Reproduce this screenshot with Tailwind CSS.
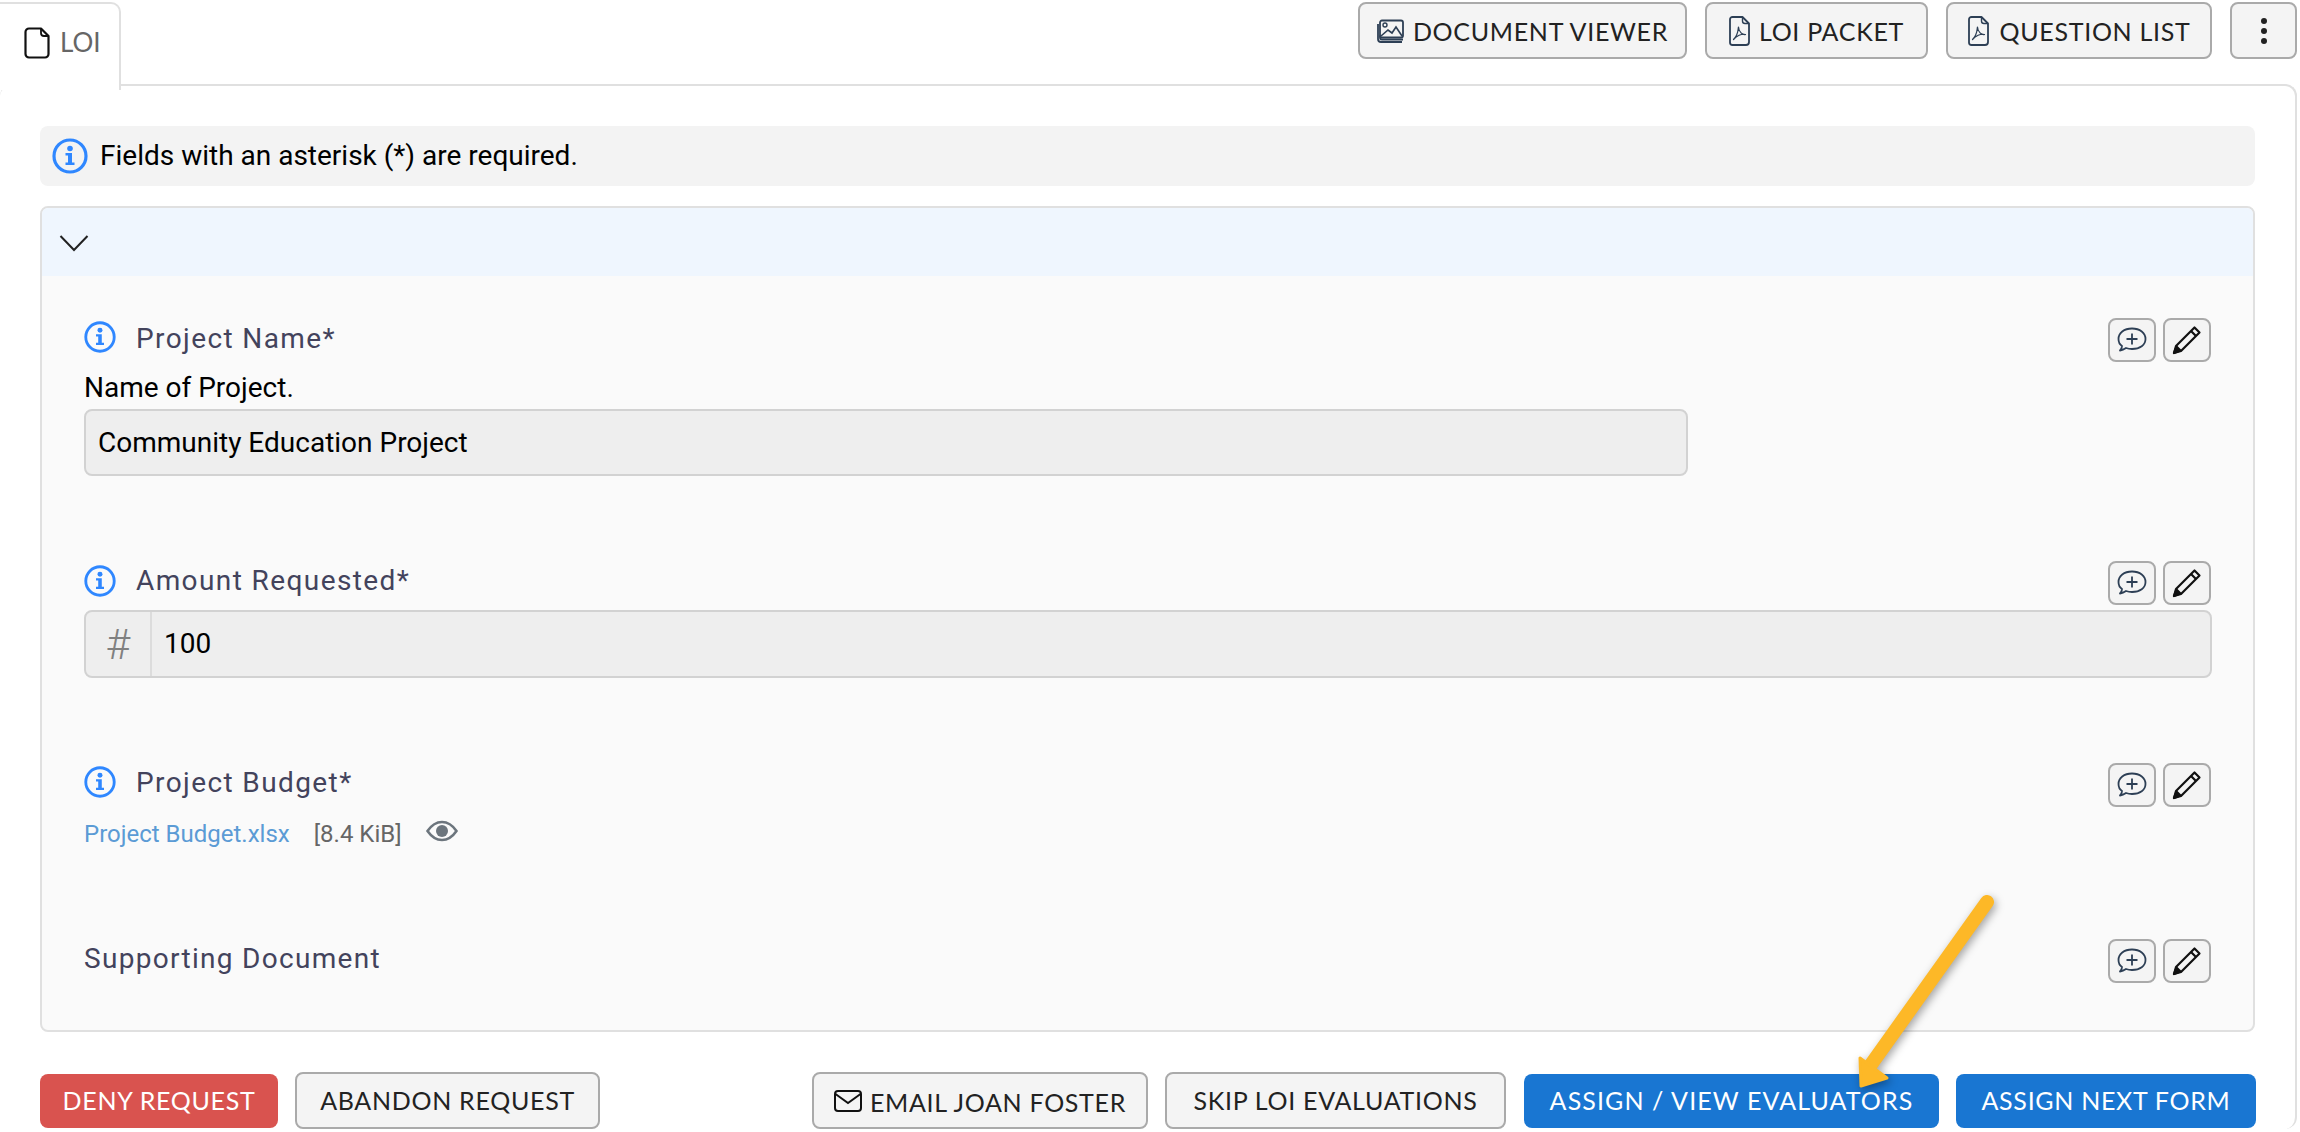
<!DOCTYPE html>
<html lang="en">
  <head>
    <meta charset="UTF-8" />
    <title>LOI</title>
    <script src="https://cdn.jsdelivr.net/npm/@tailwindcss/browser@4"></script>
  </head>
  <body class="bg-white font-['Roboto',sans-serif] text-black">
    <div class="relative w-[2300px] h-[1132px] overflow-hidden">
      <!-- Tab strip -->
      <div class="flex justify-between items-start h-[86px] pr-[3px]">
        <div class="relative z-10 flex items-center gap-[10px] w-[121px] h-[88px] mt-[2px] pl-[24px] pb-[9px] bg-white border-2 border-l-0 border-b-0 border-[#e0e0e0] rounded-tr-[10px] font-['Lato',sans-serif] text-[26px] text-[#666]">
          <svg class="w-[26px] h-[32px]" viewBox="0 0 26 32" fill="none" stroke="#111" stroke-width="2.2" stroke-linejoin="round"><path d="M5 1.5h12l7.5 7.5v18a3.5 3.5 0 0 1-3.5 3.5H5A3.5 3.5 0 0 1 1.5 27V5A3.5 3.5 0 0 1 5 1.5z"/><path d="M17 1.5V6a3 3 0 0 0 3 3h4.500" stroke-width="1.800"/></svg>
          <span>LOI</span>
        </div>
        <div class="flex gap-[18px] mt-[2px] font-['Lato',sans-serif] text-[25px] tracking-[0.7px] text-[#222]">
          <button class="flex items-center justify-center gap-[8px] w-[329px] h-[57px] bg-[#f4f4f4] border-2 border-[#aaa] rounded-[8px]">
            <svg class="w-[28px] h-[24px]" viewBox="0 0 28 24" fill="none" stroke="#2d3f55" stroke-width="1.800"><rect x="3" y="1.500" width="23" height="17" rx="2"/><path d="M3 16.500v2a2 2 0 0 0 2 2h21M1 5v15a3 3 0 0 0 3 3h21"/><circle cx="8" cy="6" r="2" stroke-width="1.400"/><path d="M4 17l7-6 4 3 4-6 6 9" stroke-width="1.600"/></svg>
            <span class="pt-[3px]">DOCUMENT VIEWER</span>
          </button>
          <button class="flex items-center justify-center gap-[9px] w-[223px] h-[57px] bg-[#f4f4f4] border-2 border-[#aaa] rounded-[8px]">
            <svg class="w-[21px] h-[30px]" viewBox="0 0 21 30" fill="none" stroke="#2d3f55" stroke-width="1.800" stroke-linejoin="round"><path d="M3.500 1h10l6.500 6.500V26a3 3 0 0 1-3 3H3.500a2.500 2.500 0 0 1-2.500-2.500v-23A2.500 2.500 0 0 1 3.500 1z"/><path d="M13.500 1v4a2.500 2.500 0 0 0 2.500 2.500h4" stroke-width="1.400"/><path d="M9.500 11c-.8 3 .3 7-5 12.500 3-3.500 8-6 12-5-2.500 1-7-3-7-7.500z" stroke-width="1.200"/></svg>
            <span class="pt-[3px]">LOI PACKET</span>
          </button>
          <button class="flex items-center justify-center gap-[11px] w-[266px] h-[57px] bg-[#f4f4f4] border-2 border-[#aaa] rounded-[8px]">
            <svg class="w-[21px] h-[30px]" viewBox="0 0 21 30" fill="none" stroke="#2d3f55" stroke-width="1.800" stroke-linejoin="round"><path d="M3.500 1h10l6.500 6.500V26a3 3 0 0 1-3 3H3.500a2.500 2.500 0 0 1-2.500-2.500v-23A2.500 2.500 0 0 1 3.500 1z"/><path d="M13.500 1v4a2.500 2.500 0 0 0 2.500 2.500h4" stroke-width="1.400"/><path d="M9.500 11c-.8 3 .3 7-5 12.500 3-3.500 8-6 12-5-2.500 1-7-3-7-7.500z" stroke-width="1.200"/></svg>
            <span class="pt-[3px]">QUESTION LIST</span>
          </button>
          <button class="flex flex-col items-center justify-center gap-[4px] w-[67px] h-[57px] bg-[#f4f4f4] border-2 border-[#aaa] rounded-[8px]">
            <span class="w-[6px] h-[6px] rounded-full bg-[#222]"></span>
            <span class="w-[6px] h-[6px] rounded-full bg-[#222]"></span>
            <span class="w-[6px] h-[6px] rounded-full bg-[#222]"></span>
          </button>
        </div>
      </div>

      <!-- Panel -->
      <div class="w-[2297px] -mt-[2px] pl-[40px] pr-[40px] pt-[40px] border-t-2 border-r-2 border-[#e0e0e0] rounded-[12px]">
        <div class="flex items-center gap-[11px] h-[60px] pl-[12px] bg-[#f3f3f3] rounded-[8px] text-[28px] w-[2215px]">
          <svg class="w-[36px] h-[36px]" viewBox="0 0 36 36"><circle cx="18" cy="18" r="16" fill="none" stroke="#2f87ff" stroke-width="3.200"/><circle cx="18" cy="10.500" r="2.800" fill="#2f87ff"/><path d="M13.500 15h6.500v9.500h2.500V27h-9v-2.500H16V17.500h-2.500z" fill="#2f87ff"/></svg>
          <span class="pl-[1px]">Fields with an asterisk (*) are required.</span>
        </div>

        <div class="mt-[20px] w-[2215px] h-[826px] border-2 border-[#e0e0e0] rounded-[8px] bg-[#fafafa] overflow-hidden">
          <div class="flex items-center h-[68px] pl-[17px] pt-[2px] bg-[#eff6fe]">
            <svg class="w-[30px] h-[18px]" viewBox="0 0 30 18" fill="none" stroke="#222" stroke-width="2"><path d="M1.500 2L15 16 28.500 2"/></svg>
          </div>

          <div class="pl-[42px] pr-[42px] pt-[42px]">
            <!-- Project Name -->
            <div class="h-[244px]">
              <div class="flex justify-between items-start h-[55px]">
                <div class="flex items-center gap-[20px] h-[34px] mt-[2px] text-[28px] tracking-[1.4px] text-[#43435c]">
                  <svg class="w-[32px] h-[32px]" viewBox="0 0 36 36"><circle cx="18" cy="18" r="16" fill="none" stroke="#2f87ff" stroke-width="3.200"/><circle cx="18" cy="10.500" r="2.800" fill="#2f87ff"/><path d="M13.500 15h6.500v9.500h2.500V27h-9v-2.500H16V17.500h-2.500z" fill="#2f87ff"/></svg>
                  <span class="pt-[3px]">Project Name*</span>
                </div>
                <div class="flex gap-[7px]">
                  <button class="flex items-center justify-center w-[48px] h-[44px] bg-[#f4f4f4] border-2 border-[#aaa] rounded-[8px]">
                    <svg class="w-[30px] h-[26px]" viewBox="0 0 30 26" fill="none" stroke="#2d3f55" stroke-width="1.800"><path d="M5 19C2 17 1.500 14.500 1.500 12 1.500 6 7 1.500 15 1.500S28.500 6 28.500 12 23 22 15 22c-2 0-4-.3-6-1-1.500 1-3 2-6 2.500 1-1 2-3 2-4.500z" stroke-linejoin="round"/><path d="M15 6.500v11M9.500 12h11"/></svg>
                  </button>
                  <button class="flex items-center justify-center w-[48px] h-[44px] bg-[#f4f4f4] border-2 border-[#aaa] rounded-[8px]">
                    <svg class="w-[30px] h-[30px]" viewBox="0 0 30 30" fill="none" stroke="#111" stroke-width="2.200" stroke-linejoin="round"><path d="M22.500 2.500l5 5L9 26l-7 2 2-7z"/><path d="M19 6l5 5M4 21l5 5"/><path d="M2 28l2-5 3 3z" fill="#111"/></svg>
                  </button>
                </div>
              </div>
              <div class="h-[36px] text-[28px] leading-[30px]">Name of Project.</div>
              <div class="flex items-center w-[1604px] h-[67px] pl-[12px] bg-[#eeeeee] border-2 border-[#d2d2d2] rounded-[8px] text-[28px]">Community Education Project</div>
            </div>

            <!-- Amount Requested -->
            <div class="h-[201px]">
              <div class="flex justify-between items-start h-[48px]">
                <div class="flex items-center gap-[20px] h-[34px] mt-[2px] text-[28px] tracking-[1.4px] text-[#43435c]">
                  <svg class="w-[32px] h-[32px]" viewBox="0 0 36 36"><circle cx="18" cy="18" r="16" fill="none" stroke="#2f87ff" stroke-width="3.200"/><circle cx="18" cy="10.500" r="2.800" fill="#2f87ff"/><path d="M13.500 15h6.500v9.500h2.500V27h-9v-2.500H16V17.500h-2.500z" fill="#2f87ff"/></svg>
                  <span>Amount Requested*</span>
                </div>
                <div class="flex gap-[7px] -mt-[1px]">
                  <button class="flex items-center justify-center w-[48px] h-[44px] bg-[#f4f4f4] border-2 border-[#aaa] rounded-[8px]">
                    <svg class="w-[30px] h-[26px]" viewBox="0 0 30 26" fill="none" stroke="#2d3f55" stroke-width="1.800"><path d="M5 19C2 17 1.500 14.500 1.500 12 1.500 6 7 1.500 15 1.500S28.500 6 28.500 12 23 22 15 22c-2 0-4-.3-6-1-1.500 1-3 2-6 2.500 1-1 2-3 2-4.500z" stroke-linejoin="round"/><path d="M15 6.500v11M9.500 12h11"/></svg>
                  </button>
                  <button class="flex items-center justify-center w-[48px] h-[44px] bg-[#f4f4f4] border-2 border-[#aaa] rounded-[8px]">
                    <svg class="w-[30px] h-[30px]" viewBox="0 0 30 30" fill="none" stroke="#111" stroke-width="2.200" stroke-linejoin="round"><path d="M22.500 2.500l5 5L9 26l-7 2 2-7z"/><path d="M19 6l5 5M4 21l5 5"/><path d="M2 28l2-5 3 3z" fill="#111"/></svg>
                  </button>
                </div>
              </div>
              <div class="flex items-stretch w-[2128px] h-[68px] bg-[#eeeeee] border-2 border-[#d2d2d2] rounded-[8px] text-[28px]">
                <div class="flex items-center justify-center w-[66px] border-r-2 border-[#dcdcdc] text-[42px] font-light text-[#808080]">#</div>
                <div class="flex items-center pl-[12px]">100</div>
              </div>
            </div>

            <!-- Project Budget -->
            <div class="h-[176px]">
              <div class="flex justify-between items-start h-[55px]">
                <div class="flex items-center gap-[20px] h-[34px] mt-[2px] text-[28px] tracking-[1.4px] text-[#43435c]">
                  <svg class="w-[32px] h-[32px]" viewBox="0 0 36 36"><circle cx="18" cy="18" r="16" fill="none" stroke="#2f87ff" stroke-width="3.200"/><circle cx="18" cy="10.500" r="2.800" fill="#2f87ff"/><path d="M13.500 15h6.500v9.500h2.500V27h-9v-2.500H16V17.500h-2.500z" fill="#2f87ff"/></svg>
                  <span class="pt-[1px]">Project Budget*</span>
                </div>
                <div class="flex gap-[7px]">
                  <button class="flex items-center justify-center w-[48px] h-[44px] bg-[#f4f4f4] border-2 border-[#aaa] rounded-[8px]">
                    <svg class="w-[30px] h-[26px]" viewBox="0 0 30 26" fill="none" stroke="#2d3f55" stroke-width="1.800"><path d="M5 19C2 17 1.500 14.500 1.500 12 1.500 6 7 1.500 15 1.500S28.500 6 28.500 12 23 22 15 22c-2 0-4-.3-6-1-1.500 1-3 2-6 2.500 1-1 2-3 2-4.500z" stroke-linejoin="round"/><path d="M15 6.500v11M9.500 12h11"/></svg>
                  </button>
                  <button class="flex items-center justify-center w-[48px] h-[44px] bg-[#f4f4f4] border-2 border-[#aaa] rounded-[8px]">
                    <svg class="w-[30px] h-[30px]" viewBox="0 0 30 30" fill="none" stroke="#111" stroke-width="2.200" stroke-linejoin="round"><path d="M22.500 2.500l5 5L9 26l-7 2 2-7z"/><path d="M19 6l5 5M4 21l5 5"/><path d="M2 28l2-5 3 3z" fill="#111"/></svg>
                  </button>
                </div>
              </div>
              <div class="flex items-center h-[32px] text-[24px]">
                <span class="text-[#5b9bd5]">Project Budget.xlsx</span>
                <span class="ml-[24px] text-[#666]">[8.4 KiB]</span>
                <svg class="ml-[24px] -mt-[6px] w-[32px] h-[22px]" viewBox="0 0 32 22"><path d="M1.500 11C6 4.500 11 2 16 2s10 2.500 14.500 9C26 17.500 21 20 16 20S6 17.500 1.500 11z" fill="none" stroke="#6c757d" stroke-width="2.600"/><circle cx="16" cy="11" r="6" fill="#6c757d"/></svg>
              </div>
            </div>

            <!-- Supporting Document -->
            <div class="flex justify-between items-start">
              <div class="flex items-center h-[34px] mt-[3px] text-[28px] tracking-[1.3px] text-[#43435c]">Supporting Document</div>
              <div class="flex gap-[7px]">
                <button class="flex items-center justify-center w-[48px] h-[44px] bg-[#f4f4f4] border-2 border-[#aaa] rounded-[8px]">
                  <svg class="w-[30px] h-[26px]" viewBox="0 0 30 26" fill="none" stroke="#2d3f55" stroke-width="1.800"><path d="M5 19C2 17 1.500 14.500 1.500 12 1.500 6 7 1.500 15 1.500S28.500 6 28.500 12 23 22 15 22c-2 0-4-.3-6-1-1.500 1-3 2-6 2.500 1-1 2-3 2-4.500z" stroke-linejoin="round"/><path d="M15 6.500v11M9.500 12h11"/></svg>
                </button>
                <button class="flex items-center justify-center w-[48px] h-[44px] bg-[#f4f4f4] border-2 border-[#aaa] rounded-[8px]">
                  <svg class="w-[30px] h-[30px]" viewBox="0 0 30 30" fill="none" stroke="#111" stroke-width="2.200" stroke-linejoin="round"><path d="M22.500 2.500l5 5L9 26l-7 2 2-7z"/><path d="M19 6l5 5M4 21l5 5"/><path d="M2 28l2-5 3 3z" fill="#111"/></svg>
                </button>
              </div>
            </div>
          </div>
        </div>

        <!-- Actions -->
        <div class="flex justify-between items-start w-[2216px] mt-[40px] font-['Lato',sans-serif] text-[25px] tracking-[0.7px]">
          <div class="flex items-start gap-[17px]">
            <button class="w-[238px] h-[54px] mt-[2px] bg-[#d9534f] rounded-[8px] text-white">DENY REQUEST</button>
            <button class="w-[305px] h-[57px] bg-[#f4f4f4] border-2 border-[#aaa] rounded-[8px] text-[#222]">ABANDON REQUEST</button>
          </div>
          <div class="flex items-start gap-[17px]">
            <button class="flex items-center justify-center gap-[8px] w-[336px] h-[57px] bg-[#f4f4f4] border-2 border-[#aaa] rounded-[8px] text-[#222]">
              <svg class="w-[28px] h-[22px]" viewBox="0 0 28 22" fill="none" stroke="#111" stroke-width="2"><rect x="1" y="1" width="26" height="20" rx="3"/><path d="M1.500 4L14 13 26.500 4"/></svg>
              <span class="pt-[5px]">EMAIL JOAN FOSTER</span>
            </button>
            <button class="w-[341px] h-[57px] mr-[1px] bg-[#f4f4f4] border-2 border-[#aaa] rounded-[8px] text-[#222]">SKIP LOI EVALUATIONS</button>
            <button class="w-[415px] h-[54px] mt-[2px] bg-[#1976d2] rounded-[8px] text-white tracking-[1.1px]">ASSIGN / VIEW EVALUATORS</button>
            <button class="w-[300px] h-[54px] mt-[2px] bg-[#1976d2] rounded-[8px] text-white">ASSIGN NEXT FORM</button>
          </div>
        </div>
      </div>

      <!-- Annotation arrow -->
      <svg class="absolute left-[1840px] top-[880px] w-[170px] h-[230px] drop-shadow-[2px_3px_4px_rgba(0,0,0,0.35)]" viewBox="0 0 170 230">
        <path d="M147 22L30 186" fill="none" stroke="#fdb827" stroke-width="14" stroke-linecap="round"/>
        <path d="M20 178L47 198 21 206z" fill="#fdb827" stroke="#fdb827" stroke-width="3" stroke-linejoin="round"/>
      </svg>
    </div>
  </body>
</html>
